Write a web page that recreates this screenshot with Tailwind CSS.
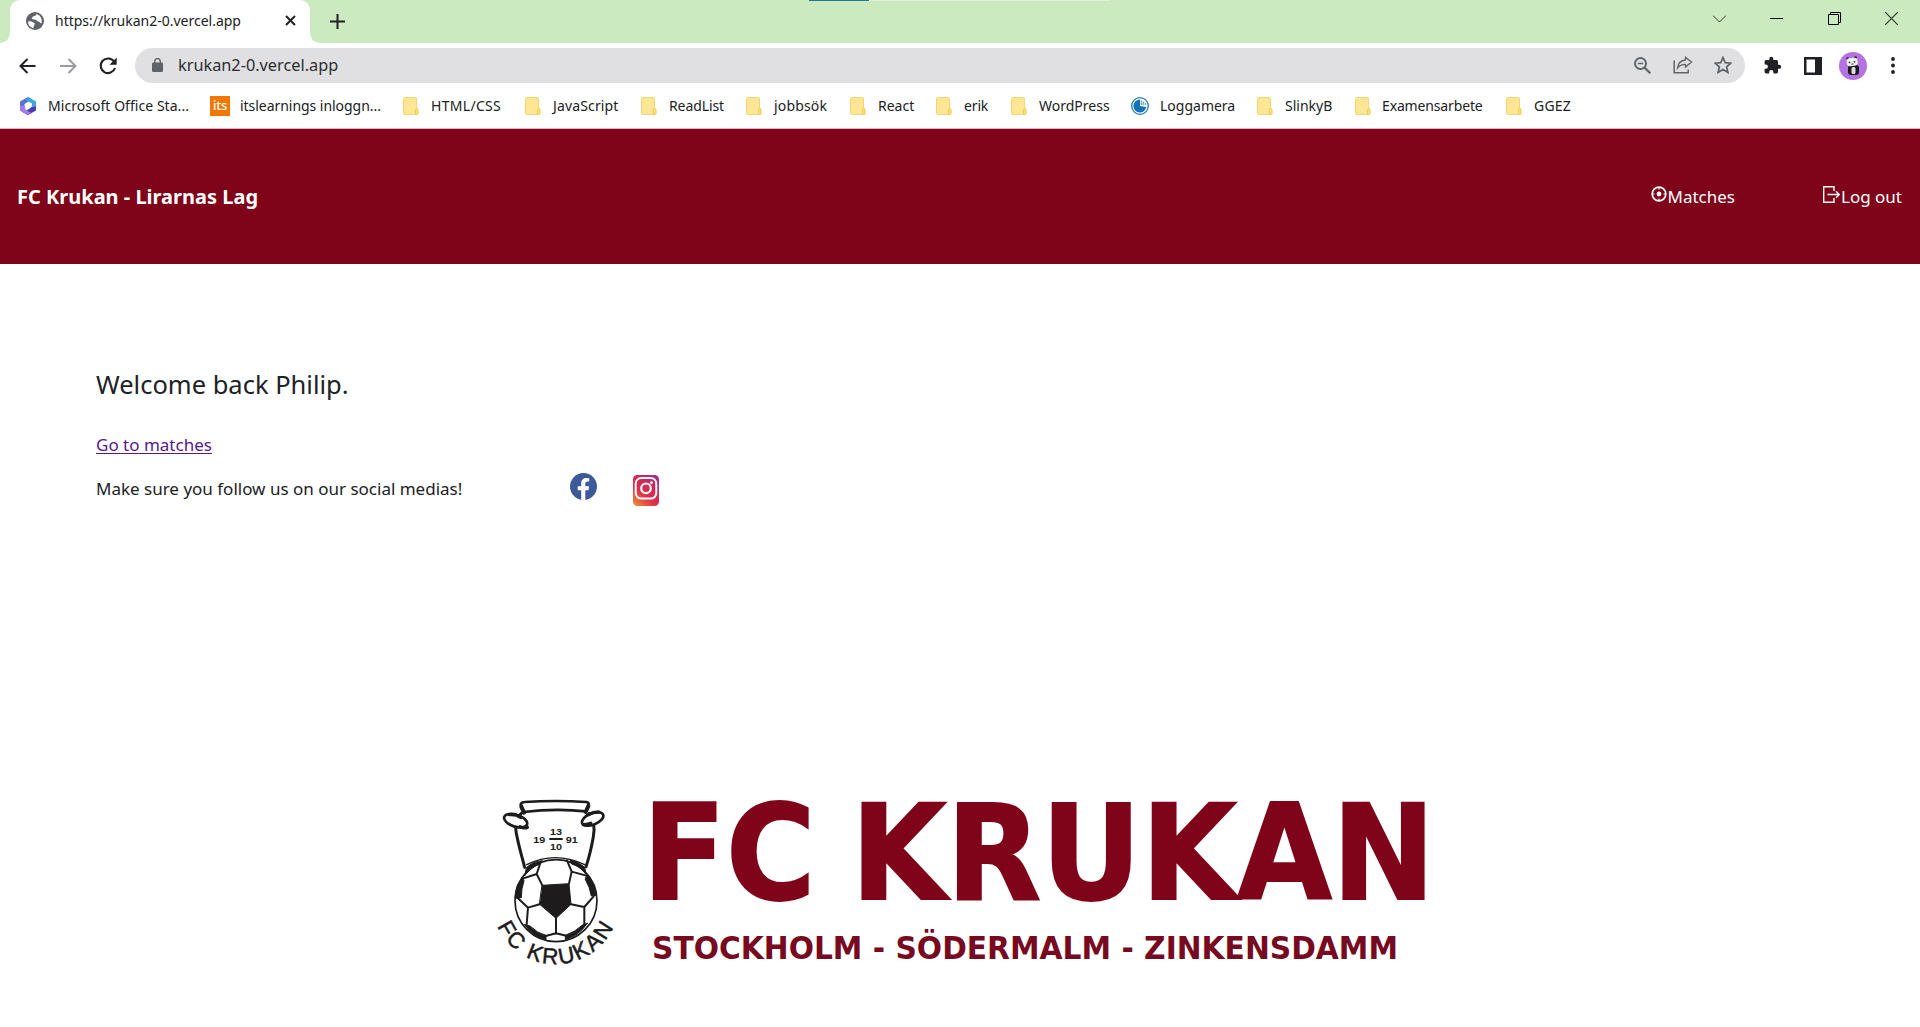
<!DOCTYPE html>
<html lang="sv">
<head>
<meta charset="utf-8">
<title>FC Krukan</title>
<script src="https://cdn.jsdelivr.net/npm/@tailwindcss/browser@4"></script>
</head>
<body class="flex h-screen flex-col overflow-hidden bg-white font-['Noto_Sans',sans-serif] text-[#202124]">

<svg class="hidden">
  <symbol id="folder" viewBox="0 0 16 18">
    <rect x=".5" y=".5" width="13" height="17" rx="1" fill="#ffe694" stroke="#f3d673"/>
    <path d="M12.500 17.500v-5q0-1 1.300-1t1.300 1v4q0 1-1.300 1z" fill="#ffe07a" stroke="#eec84e" stroke-width=".9"/>
  </symbol>
</svg>

<!-- Tab strip -->
<div class="relative flex h-[43px] shrink-0 items-start bg-[#cbeac0]">
  <div class="absolute left-[809px] top-0 h-px w-[60px] bg-[#2277a0]"></div>
  <div class="absolute left-[869px] top-0 h-px w-[241px] bg-[#dfeeda]"></div>
  <svg class="h-[43px] w-[10px]" viewBox="0 0 10 43"><path d="M10 32v11H0q10-1 10-11z" fill="#fff"/></svg>
  <div class="flex h-[43px] w-[300px] items-center rounded-t-[10px] bg-white pb-[2px] pl-4 pr-[14px]">
    <svg class="size-[18px]" viewBox="0 0 18 18">
      <circle cx="9" cy="9" r="9" fill="#5f6368"/>
      <path d="M2 9.500c2.500-.5 3.500.3 5.500 1 1.500.5 1.500 1.500.8 2.500-.8 1-.5 2-.8 3.200C4 15.500 2 13 2 9.500zM10.500 2c-.3 1.500-1.500 2-3 2.200-.8.1-.8 1.300-1.800 1.800.3 1.300 1 1.500 2.500 1.400 1.800-.1 2.200.8 3 1.600 1 .9 2.800.6 3 2l1.300.2c1-3-.3-7.800-5-9.200z" fill="#fff"/>
    </svg>
    <span class="ml-[11px] text-[14px] leading-5">https://krukan2-0.vercel.app</span>
    <svg class="ml-auto size-[11px]" viewBox="0 0 11 11"><path d="M1 1l9 9M10 1l-9 9" stroke="#202124" stroke-width="2"/></svg>
  </div>
  <svg class="h-[43px] w-[10px]" viewBox="0 0 10 43"><path d="M0 32v11h10Q0 42 0 32z" fill="#fff"/></svg>
  <svg class="ml-[10px] mt-[14px] size-[15px]" viewBox="0 0 15 15"><path d="M7.500 0v15M0 7.500h15" stroke="#202124" stroke-width="2"/></svg>
  <div class="ml-auto mr-[22px] mt-[12px] flex items-center gap-[44.500px]">
    <svg class="h-[13px] w-[13px]" viewBox="0 0 13 13"><path d="M0 3.500l6.500 6.500L13 3.500" fill="none" stroke="#2c3a2a"/></svg>
    <svg class="h-[13px] w-[13px]" viewBox="0 0 13 13"><path d="M0 6.500h13" stroke="#000"/></svg>
    <svg class="h-[13px] w-[13px]" viewBox="0 0 13 13"><path d="M.5 2.500h10v10H.500zM2.500 2.500v-2h10v10h-2" fill="none" stroke="#000"/></svg>
    <svg class="h-[13px] w-[13px]" viewBox="0 0 13 13"><path d="M0 0l13 13M13 0L0 13" stroke="#2c3a2a" stroke-width="1.200"/></svg>
  </div>
</div>

<!-- Toolbar -->
<div class="flex h-[43px] shrink-0 items-center pl-[19px] pr-[24px] pt-[2px]">
  <svg class="h-4 w-[17px]" viewBox="0 0 17 16" fill="none" stroke="#202124" stroke-width="2"><path d="M16.500 8H2M8.500 1l-7 7 7 7"/></svg>
  <svg class="ml-6 h-4 w-[17px]" viewBox="0 0 17 16" fill="none" stroke="#9a9b9e" stroke-width="2"><path d="M0 8h15M8.500 1l7 7-7 7"/></svg>
  <svg class="ml-[22px] size-[18px]" viewBox="0 0 18 18"><path d="M15 4.500A7.300 7.300 0 1 0 16 11" fill="none" stroke="#202124" stroke-width="2.100"/><path d="M17.700.5v7.200h-7.200z" fill="#202124"/></svg>
  <div class="ml-[18px] flex h-[35px] w-[1610px] items-center rounded-full bg-[#e0e0e2] pb-px pl-[17px] pr-[13px]">
    <svg class="h-[14px] w-[11px]" viewBox="0 0 11 14"><rect y="4.500" width="11" height="9.500" rx="1.200" fill="#5f6368"/><path d="M2.700 5.500V3.400a2.800 2.800 0 0 1 5.600 0v2.100" fill="none" stroke="#5f6368" stroke-width="1.400"/></svg>
    <span class="ml-[15px] text-[16.300px] leading-6 text-[#2b2d31]">krukan2-0.vercel.app</span>
    <svg class="ml-auto size-[17px]" viewBox="0 0 17 17" fill="none" stroke="#5f6368"><circle cx="6.500" cy="6.500" r="5.500" stroke-width="1.900"/><path d="M10.500 10.500l5.800 5.800" stroke-width="2.200"/><path d="M3.800 6.500h5.400" stroke-width="1.500"/></svg>
    <svg class="ml-[22px] h-[18px] w-[20px]" viewBox="0 0 20 18" fill="none" stroke="#5f6368" stroke-width="1.300"><path d="M1.200 4.500v12.300h14v-3.300" stroke-width="1.500"/><path d="M12.500 1.200l6 4.800-6 5V8.300c-3.500 0-6 1-8 3.700.5-4.500 3.500-7.500 8-8z"/></svg>
    <svg class="ml-[21px] size-[18px]" viewBox="0 0 18 18"><path d="M9 1.500l2.200 5.200 5.600.5-4.200 3.700 1.300 5.500L9 13.500l-4.900 2.900 1.300-5.500L1.200 7.200l5.600-.5z" fill="none" stroke="#5f6368" stroke-width="1.700"/></svg>
  </div>
  <svg class="ml-[18px] size-[19px]" viewBox="0 0 24 24" fill="#202124"><path d="M20.500 11H19V7a2 2 0 0 0-2-2h-4V3.500a2.500 2.500 0 0 0-5 0V5H4a2 2 0 0 0-2 2v3.800h1.500a2.700 2.700 0 0 1 0 5.400H2V20a2 2 0 0 0 2 2h3.800v-1.500a2.700 2.700 0 0 1 5.400 0V22H17a2 2 0 0 0 2-2v-4h1.500a2.500 2.500 0 0 0 0-5z"/></svg>
  <svg class="ml-[22px] size-[18px]" viewBox="0 0 18 18"><path d="M0 0h18v18H0z" fill="#202124"/><path d="M2.500 2.500h8.500v13H2.500z" fill="#fff"/></svg>
  <svg class="ml-[17px] size-7" viewBox="0 0 28 28">
    <circle cx="14" cy="14" r="14" fill="#b473e0"/>
    <circle cx="8.700" cy="6.500" r="1.300" fill="#222"/><circle cx="16.500" cy="5.500" r="1.300" fill="#222"/>
    <rect x="9" y="13" width="11" height="10" rx="3" fill="#1c1a22"/>
    <rect x="12.500" y="15" width="4" height="7" rx="1.500" fill="#ddd"/>
    <rect x="7.700" y="6" width="11" height="8" rx="3.300" fill="#f1f0f2" transform="rotate(-6 13 10)"/>
    <circle cx="10.500" cy="10.300" r=".9" fill="#333"/><circle cx="15.500" cy="9.800" r=".9" fill="#333"/><path d="M12.300 12h2" stroke="#333"/>
  </svg>
  <svg class="ml-[24px] h-[17px] w-[4px]" viewBox="0 0 4 17" fill="#202124"><circle cx="2" cy="2" r="1.900"/><circle cx="2" cy="8.500" r="1.900"/><circle cx="2" cy="15" r="1.900"/></svg>
</div>

<!-- Bookmarks bar -->
<div class="flex h-[42px] shrink-0 items-center whitespace-nowrap pb-[2px] pl-[19px] text-[14px] leading-5">
  <div class="flex w-[191px] shrink-0 items-center">
    <svg class="mr-[11px] size-[18px]" viewBox="0 0 18 18">
      <path d="M9 0L1 4.500v9L5.500 16V7l4-2.500L13 2z" fill="#5a6fd8"/>
      <path d="M9 0l8 4.500v6l-4-1.500V6.500L7 3.500z" fill="#3aa9e0"/>
      <path d="M17 9.500v4L9 18l-6-3.300 6-2.200 4-3z" fill="#4a3fb0"/>
      <path d="M1 9v4.500L8 18l4-2-5.500-3.500-1-4z" fill="#a27be6"/>
      <path d="M9 6l2.700 1.500v3.300L9 12.300l-2.700-1.500V7.500z" fill="#fff"/>
    </svg>
    <span class="tracking-[0.045px]">Microsoft Office Sta...</span>
  </div>
  <div class="flex w-[193px] shrink-0 items-center">
    <span class="mr-[10px] flex size-5 items-center justify-center bg-[#f07800] pb-px text-[13px] font-medium leading-none tracking-tight text-white">its</span>
    <span class="tracking-[-0.04px]">itslearnings inloggn...</span>
  </div>
  <div class="flex w-[122px] shrink-0 items-center"><svg class="mr-[12px] h-[18px] w-4"><use href="#folder"/></svg><span class="tracking-[0.3px]">HTML/CSS</span></div>
  <div class="flex w-[116px] shrink-0 items-center"><svg class="mr-[12px] h-[18px] w-4"><use href="#folder"/></svg><span class="tracking-[0.14px]">JavaScript</span></div>
  <div class="flex w-[105px] shrink-0 items-center"><svg class="mr-[12px] h-[18px] w-4"><use href="#folder"/></svg><span class="tracking-[-0.1px]">ReadList</span></div>
  <div class="flex w-[104px] shrink-0 items-center"><svg class="mr-[12px] h-[18px] w-4"><use href="#folder"/></svg><span class="tracking-[0.15px]">jobbsök</span></div>
  <div class="flex w-[86px] shrink-0 items-center"><svg class="mr-[12px] h-[18px] w-4"><use href="#folder"/></svg><span>React</span></div>
  <div class="flex w-[75px] shrink-0 items-center"><svg class="mr-[12px] h-[18px] w-4"><use href="#folder"/></svg><span class="tracking-[-0.15px]">erik</span></div>
  <div class="flex w-[120px] shrink-0 items-center"><svg class="mr-[12px] h-[18px] w-4"><use href="#folder"/></svg><span>WordPress</span></div>
  <div class="flex w-[126px] shrink-0 items-center">
    <svg class="mr-[11px] size-[18px]" viewBox="0 0 18 18"><circle cx="9" cy="9" r="8.300" fill="#fff" stroke="#2a7ab5" stroke-width="1.300"/><path d="M9 2.500V9l6.300 1A6.500 6.500 0 1 1 9 2.500z" fill="#1274b8"/><path d="M10.300 8V3.500M12.300 8V4.500M14.300 8V6" stroke="#5ba3d2" stroke-width="1.200"/></svg>
    <span>Loggamera</span>
  </div>
  <div class="flex w-[98px] shrink-0 items-center"><svg class="mr-[12px] h-[18px] w-4"><use href="#folder"/></svg><span>SlinkyB</span></div>
  <div class="flex w-[151px] shrink-0 items-center"><svg class="mr-[11px] h-[18px] w-4"><use href="#folder"/></svg><span class="tracking-[-0.15px]">Examensarbete</span></div>
  <div class="flex shrink-0 items-center"><svg class="mr-[12px] h-[18px] w-4"><use href="#folder"/></svg><span class="tracking-[0.2px]">GGEZ</span></div>
</div>

<!-- Site header -->
<header class="flex h-[136px] shrink-0 items-center justify-between border-t border-[#e8b5bd] bg-[#7f0319] pl-[17px] pr-[18px] text-white">
  <h1 class="pt-px text-[20px] font-bold leading-7">FC Krukan - Lirarnas Lag</h1>
  <nav class="flex items-center gap-[88px] text-[17px] leading-6">
    <a class="flex items-center">
      <svg class="mb-[5px] mr-px size-4" viewBox="0 0 16 16" fill="none" stroke="#fff"><circle cx="8" cy="8" r="6.800" stroke-width="1.700"/><circle cx="8" cy="8" r="2.400" fill="#fff" stroke="none"/><path d="M8 1v2.500M8 12.500v2.500M1 8h2.500M12.500 8h2.500" stroke-width="1.200"/></svg>
      <span>Matches</span>
    </a>
    <a class="flex items-center">
      <svg class="mb-[5px] mr-px h-[17px] w-[17px]" viewBox="0 0 17 17" fill="none" stroke="#fff" stroke-width="1.400"><path d="M11 5V.7H.7v15.600H11V12"/><path d="M4.500 8.500h11.500M13 5.200l3.300 3.300-3.300 3.300"/></svg>
      <span>Log out</span>
    </a>
  </nav>
</header>

<main class="flex flex-1 flex-col px-24">
  <h2 class="mt-[101px] text-[25.500px] leading-[38px]">Welcome back Philip.</h2>
  <a class="mt-[30px] self-start text-[17px] leading-[24px] text-[#551a8b] underline decoration-1 underline-offset-2">Go to matches</a>
  <div class="mt-[16px] flex h-[32px] items-start">
    <p class="w-[474px] pt-[4px] text-[17px] leading-6">Make sure you follow us on our social medias!</p>
    <svg class="h-[27px] w-[27px]" viewBox="0 0 27 27"><circle cx="13.500" cy="13.500" r="13.500" fill="#3c5a99"/><path d="M11.200 27V17.300H7.800v-4h3.400v-3c0-3.500 2-5.400 5.200-5.400 1.400 0 2.800.3 2.800.3v3.300h-1.700c-1.600 0-2.200 1-2.200 2.100v2.700h3.800l-.6 4h-3.200V27z" fill="#fff"/></svg>
    <svg class="ml-[36px] mt-[2px] h-[31px] w-[26px]" viewBox="0 0 26 31">
      <defs><linearGradient id="ig" x1="0.1" y1="1" x2="0.8" y2="0"><stop offset="0" stop-color="#f28a35"/><stop offset=".4" stop-color="#dd2f4b"/><stop offset=".7" stop-color="#d02855"/><stop offset="1" stop-color="#a82a85"/></linearGradient></defs>
      <rect width="26" height="31" rx="4.500" fill="url(#ig)"/>
      <rect x="2.700" y="3" width="20.600" height="20.600" rx="5.500" fill="none" stroke="#fff" stroke-width="2"/>
      <circle cx="13" cy="13.300" r="4.800" fill="none" stroke="#fff" stroke-width="2.200"/><circle cx="18.500" cy="7.700" r="1.400" fill="#fff"/>
    </svg>
  </div>

  <!-- Club logo -->
  <svg class="mb-[37px] mt-auto h-[220px] w-[960px] self-center" viewBox="480 770 960 220">
    <g transform="translate(480 780) scale(.3333)" stroke="#1d1b1c" fill="none" stroke-linejoin="round" stroke-linecap="round">
      <path d="M124 100C106 120 104 140 111 170c7 35 15 60 23 92M328 100c15 20 17 42 12 70-6 35-12 60-22 90" stroke-width="9"/>
      <path d="M122 74q2-8 12-8 92-6 185 0 8 2 7 8l-8 20q-90-10-188 2z" fill="#fff" stroke-width="8"/>
      <path d="M124 80l8 18M325 78l-8 18" stroke-width="12"/>
      <ellipse cx="107" cy="122" rx="36" ry="18" transform="rotate(18 107 122)" fill="#fff" stroke-width="8"/>
      <ellipse cx="338" cy="117" rx="34" ry="17" transform="rotate(-22 338 117)" fill="#fff" stroke-width="8"/>
      <path d="M88 104q20-2 34 8M120 140q12 6 22 2M324 104q16-8 32-8M310 134q10 0 22-4" stroke-width="10"/>
      <path d="M140 254q85-42 174 0" stroke-width="4"/>
      <circle cx="228" cy="362" r="123" fill="#fff" stroke-width="5"/>
      <g fill="#1d1b1c" stroke-width="3">
        <path d="M187 316l80-5 6 62-45 42-49-42z"/>
        <path d="M140 262q20-18 48-20l-8 10q-25 8-45 34zM314 262q-20-18-44-22l5 12q25 6 42 30z"/>
        <path d="M106 345q3-32 22-52l4 10q-8 22-8 50l-18 2zM322 284q20 20 26 62l-14 2q-4-26-18-50z"/>
        <path d="M134 434l16 4q22 22 48 28v13q-40-10-64-45zM322 430l-16 6q-20 20-50 30v13q40-10 66-49z"/>
      </g>
      <path d="M187 316l-17-34 12-36M170 282l-42 14M267 311l8-36-14-34M275 275l44 12M179 373l-35 10-30-28M144 383l-4 50M273 373l40 8 28-32M313 381l0 52M228 415v46M197 468l31-8 34 8" stroke-width="6"/>
      <g fill="#1d1b1c" stroke="none" font-family="Liberation Sans, sans-serif" font-weight="700" font-size="29">
        <text x="160" y="188" textLength="36" lengthAdjust="spacingAndGlyphs">19</text>
        <text x="257" y="188" textLength="36" lengthAdjust="spacingAndGlyphs">91</text>
        <text x="210" y="164" textLength="36" lengthAdjust="spacingAndGlyphs">13</text>
        <text x="210" y="209" textLength="36" lengthAdjust="spacingAndGlyphs">10</text>
      </g>
      <path d="M208 177h40" stroke-width="6" stroke-linecap="butt"/>
      <path id="arc" stroke="none" d="M52 438A191 191 0 0 0 398 446"/>
      <text fill="#1d1b1c" stroke-width="1.500" font-family="Liberation Sans, sans-serif" font-size="67"><textPath href="#arc" textLength="438">FC KRUKAN</textPath></text>
    </g>
    <g fill="#7f0319" font-family="DejaVu Sans, sans-serif" font-weight="700">
      <g font-size="132" stroke="#7f0319" stroke-width="1.800">
        <text x="642.500" y="898.500" textLength="173" lengthAdjust="spacingAndGlyphs">FC</text>
        <text x="851" y="898.500" textLength="584" lengthAdjust="spacingAndGlyphs">KRUKAN</text>
      </g>
      <text x="652" y="959" font-size="32" fill="#770a20" textLength="746" lengthAdjust="spacingAndGlyphs">STOCKHOLM - SÖDERMALM - ZINKENSDAMM</text>
    </g>
  </svg>
</main>
</body>
</html>
